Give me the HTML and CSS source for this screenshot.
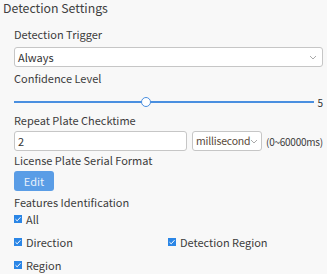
FILE: index.html
```html
<!DOCTYPE html>
<html>
<head>
<meta charset="utf-8">
<link rel="stylesheet" href="styles.css">
</head>
<body>
<div class="panel">
  <div class="title">Detection Settings</div>
  <div class="body">
    <div class="label first">Detection Trigger</div>
    <div class="select full"><span>Always</span><svg class="chev" width="8" height="5" viewBox="0 0 8 5"><path d="M1 1 L4 4 L7 1" fill="none" stroke="#aaa" stroke-width="1"/></svg></div>
    <div class="label">Confidence Level</div>
    <div class="slider-row">
      <div class="track"><div class="thumb" style="left:44%"></div></div>
      <span class="val">5</span>
    </div>
    <div class="label">Repeat Plate Checktime</div>
    <div class="input-row">
      <div class="input">2</div>
      <div class="select unit"><span>millisecond</span><svg class="chev" width="8" height="5" viewBox="0 0 8 5"><path d="M1 1 L4 4 L7 1" fill="none" stroke="#aaa" stroke-width="1"/></svg></div>
      <span class="range">(0~60000ms)</span>
    </div>
    <div class="label">License Plate Serial Format</div>
    <button class="btn">Edit</button>
    <div class="label">Features Identification</div>
    <div class="checks">
      <label class="check all"><span class="box"><svg width="8" height="8" viewBox="0 0 8 8"><path d="M1.5 4.2 L3.2 5.8 L6.5 2.2" fill="none" stroke="#fff" stroke-width="1"/></svg></span>All</label>
      <div class="grid">
        <label class="check"><span class="box"><svg width="8" height="8" viewBox="0 0 8 8"><path d="M1.5 4.2 L3.2 5.8 L6.5 2.2" fill="none" stroke="#fff" stroke-width="1"/></svg></span>Direction</label>
        <label class="check"><span class="box"><svg width="8" height="8" viewBox="0 0 8 8"><path d="M1.5 4.2 L3.2 5.8 L6.5 2.2" fill="none" stroke="#fff" stroke-width="1"/></svg></span>Detection Region</label>
        <label class="check"><span class="box"><svg width="8" height="8" viewBox="0 0 8 8"><path d="M1.5 4.2 L3.2 5.8 L6.5 2.2" fill="none" stroke="#fff" stroke-width="1"/></svg></span>Region</label>
      </div>
    </div>
  </div>
</div>
</body>
</html>
```
FILE: styles.css
```css
html, body {
  margin: 0;
  padding: 0;
  background: #f8f8f8;
}
body {
  font-family: "Noto Sans CJK SC", "Noto Sans", sans-serif;
  color: #3c3c3c;
  width: 327px;
  height: 274px;
  overflow: hidden;
}
.title {
  font-size: 12.3px;
  line-height: 17px;
  height: 18px;
  padding-left: 3px;
  color: #404040;
}
.body {
  padding: 8px 4px 0 14px;
}
.label {
  font-size: 11px;
  line-height: 16px;
  height: 16px;
}
.select, .input {
  box-sizing: border-box;
  height: 20px;
  border: 1px solid #c6c6c6;
  border-radius: 3px;
  background: #fff;
  font-size: 11px;
  line-height: 18px;
  display: flex;
  align-items: center;
  padding: 0 3px;
}
.full {
  margin: 5px 0 3px;
  justify-content: space-between;
  color: #333;
  padding-right: 5px;
}
.chev { flex: none; }
.slider-row {
  display: flex;
  align-items: center;
  height: 20px;
  margin-top: 6px;
}
.track {
  position: relative;
  flex: 1;
  height: 2px;
  background: #4a8fe0;
}
.thumb {
  position: absolute;
  top: -4px;
  width: 10px;
  height: 10px;
  box-sizing: border-box;
  margin-left: -5px;
  border: 1.5px solid #4a8fe0;
  border-radius: 50%;
  background: #fff;
}
.val {
  font-size: 10px;
  width: 9px;
  text-align: right;
  color: #333;
}
.input-row {
  display: flex;
  align-items: center;
  margin: 3px 0 1px;
}
.input {
  flex: none;
  width: 173px;
  color: #333;
}
.unit {
  flex: none;
  width: 70px;
  margin-left: 5px;
  justify-content: space-between;
  color: #5a4a3a;
  padding-right: 5px;
  font-size: 10.5px;
  letter-spacing: -0.2px;
}
.range {
  font-size: 10px;
  letter-spacing: -0.25px;
  margin-left: 4px;
  white-space: nowrap;
}
.btn {
  display: block;
  box-sizing: border-box;
  width: 40px;
  height: 20px;
  margin: 3px 0 3px;
  border: none;
  border-radius: 3px;
  background: #5a9de6;
  color: #e8f1fb;
  font-family: inherit;
  font-size: 11px;
  line-height: 20px;
  padding: 0;
}
.check {
  display: flex;
  align-items: center;
  gap: 4px;
  font-size: 11px;
  line-height: 16px;
  height: 16px;
}
.box {
  width: 8px;
  height: 8px;
  background: #2b86e6;
  display: flex;
  flex: none;
}
.checks { margin-top: 1px; }
.grid {
  display: grid;
  grid-template-columns: 154px 1fr;
  row-gap: 7px;
  margin-top: 7px;
}
```
